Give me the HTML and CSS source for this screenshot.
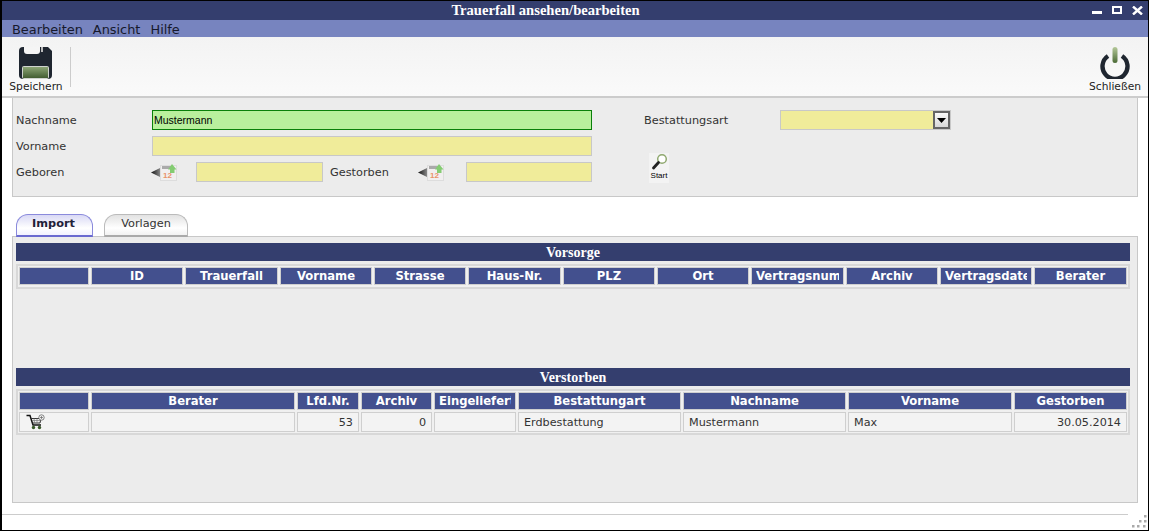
FILE: index.html
```html
<!DOCTYPE html>
<html lang="de">
<head>
<meta charset="utf-8">
<title>Trauerfall ansehen/bearbeiten</title>
<link rel="stylesheet" href="styles.css">
</head>
<body>
<div class="window">
  <header class="titlebar">
    <span class="title">Trauerfall ansehen/bearbeiten</span>
    <div class="winbtns">
      <svg class="winbtn" width="11" height="9" viewBox="0 0 11 9"><rect x="0" y="5" width="10" height="3" fill="#fff"/></svg>
      <svg class="winbtn" width="11" height="9" viewBox="0 0 11 9"><rect x="1" y="1" width="8" height="6" fill="none" stroke="#fff" stroke-width="2"/></svg>
      <svg class="winbtn" width="11" height="9" viewBox="0 0 11 9"><path d="M1 0.500 L10 8.500 M10 0.500 L1 8.500" stroke="#fff" stroke-width="2.400" fill="none"/></svg>
    </div>
  </header>
  <nav class="menubar"><span>Bearbeiten</span><span>Ansicht</span><span>Hilfe</span></nav>
  <div class="toolbar">
    <div class="tool tool-save">
      <svg width="34" height="32" viewBox="0 0 34 32">
        <defs><linearGradient id="g1" x1="0" y1="0" x2="0" y2="1"><stop offset="0" stop-color="#8fa878"/><stop offset="1" stop-color="#3f5a2e"/></linearGradient></defs>
        <path d="M4 0 H29 L33 4 V28 Q33 32 29 32 H4 Q0 32 0 28 V4 Q0 0 4 0Z" fill="#1f2630"/>
        <path d="M5 0 H21 V4 Q21 7 18 7 H8 Q5 7 5 4Z" fill="#f5f5f5"/>
        <rect x="22" y="0" width="2" height="5" fill="#bbb"/>
        <rect x="3.500" y="19.500" width="26" height="12" rx="1" fill="url(#g1)" stroke="#cfd3cf"/>
      </svg>
      <span>Speichern</span>
    </div>
    <div class="tool-sep"></div>
    <div class="tool tool-close">
      <svg width="30" height="32" viewBox="0 0 30 32">
        <defs><linearGradient id="g2" x1="0" y1="0" x2="0" y2="1"><stop offset="0" stop-color="#b5c99a"/><stop offset="1" stop-color="#4a6a35"/></linearGradient></defs>
        <path d="M8 9 A12.500 12.500 0 1 0 22 9" fill="none" stroke="#1f2630" stroke-width="4.400"/>
        <rect x="12.500" y="0" width="5" height="16" rx="2.500" fill="url(#g2)"/>
      </svg>
      <span>Schließen</span>
    </div>
  </div>
  <section class="form">
    <div class="form-left">
      <div class="row"><label class="lbl">Nachname</label><input class="inp inp-ok wide" value="Mustermann"></div>
      <div class="row"><label class="lbl">Vorname</label><input class="inp wide"></div>
      <div class="row">
        <label class="lbl">Geboren</label>
        <span class="cal">
          <svg width="27" height="17" viewBox="0 0 27 17"><defs><linearGradient id="g3" x1="0" y1="0" x2="1" y2="0"><stop offset="0" stop-color="#111"/><stop offset="1" stop-color="#888"/></linearGradient></defs><path d="M0 8.500 L9 4 V13Z" fill="url(#g3)"/><rect x="9.500" y="1.500" width="16" height="15" fill="#f1efef" stroke="#ddd"/><rect x="11" y="2" width="10" height="3" fill="#aaa"/><text x="12" y="14" class="cal-num">12</text><path d="M17 5.500 L21 0 L25.500 5.500 H23.500 V9 H19 V5.500Z" fill="#84cc72"/></svg>
        </span>
        <input class="inp date">
        <label class="lbl2">Gestorben</label>
        <span class="cal">
          <svg width="27" height="17" viewBox="0 0 27 17"><path d="M0 8.500 L9 4 V13Z" fill="url(#g3)"/><rect x="9.500" y="1.500" width="16" height="15" fill="#f1efef" stroke="#ddd"/><rect x="11" y="2" width="10" height="3" fill="#aaa"/><text x="12" y="14" class="cal-num">12</text><path d="M17 5.500 L21 0 L25.500 5.500 H23.500 V9 H19 V5.500Z" fill="#84cc72"/></svg>
        </span>
        <input class="inp date date-end">
      </div>
    </div>
    <div class="form-right">
      <div class="row"><label class="lbl">Bestattungsart</label>
        <div class="select"><span class="select-btn"><svg width="9" height="5" viewBox="0 0 9 5"><path d="M0 0 H9 L4.500 5Z" fill="#000"/></svg></span></div>
      </div>
      <div class="start">
        <svg width="17" height="19" viewBox="0 0 17 19"><circle cx="11" cy="6" r="4.300" fill="#fff" stroke="#8fa86f" stroke-width="1.500"/><path d="M7.500 9.500 L2.500 15" stroke="#222" stroke-width="2.800" stroke-linecap="round"/></svg>
        <span>Start</span>
      </div>
    </div>
  </section>
  <div class="tabs">
    <div class="tab tab-active">Import</div>
    <div class="tab">Vorlagen</div>
  </div>
  <section class="panel">
    <div class="group group-top">
      <h2 class="bar">Vorsorge</h2>
      <div class="grid grid-a">
        <div class="th"></div><div class="th"><span>ID</span></div><div class="th"><span>Trauerfall</span></div><div class="th"><span>Vorname</span></div><div class="th"><span>Strasse</span></div><div class="th"><span>Haus-Nr.</span></div><div class="th"><span>PLZ</span></div><div class="th"><span>Ort</span></div><div class="th"><span>Vertragsnummer</span></div><div class="th"><span>Archiv</span></div><div class="th"><span>Vertragsdatei</span></div><div class="th"><span>Berater</span></div>
      </div>
    </div>
    <div class="group">
      <h2 class="bar">Verstorben</h2>
      <div class="grid grid-b">
        <div class="th"></div><div class="th"><span>Berater</span></div><div class="th"><span>Lfd.Nr.</span></div><div class="th"><span>Archiv</span></div><div class="th"><span>Eingeliefert</span></div><div class="th"><span>Bestattungart</span></div><div class="th"><span>Nachname</span></div><div class="th"><span>Vorname</span></div><div class="th"><span>Gestorben</span></div>
        <div class="td td-icon">
          <svg width="19" height="16" viewBox="0 0 19 16"><path d="M0.500 1.500 H4 L7 11 H15" fill="none" stroke="#111" stroke-width="1.500"/><path d="M5 4.500 H15 L14 9 H6.500" fill="none" stroke="#333"/><path d="M6 6.500 H14.500 M8 4.500 L8.500 9 M11 4.500 L11 9" stroke="#777" stroke-width=".7"/><circle cx="7.500" cy="13.500" r="1.700" fill="#3a5a2a"/><circle cx="13.500" cy="13.500" r="1.700" fill="#3a5a2a"/><circle cx="15.500" cy="3.500" r="2.700" fill="#f4f4f4" stroke="#666" stroke-width=".8"/><path d="M14 3.500 H17 M15.500 2 V5" stroke="#666" stroke-width=".7"/></svg>
        </div>
        <div class="td"></div><div class="td num">53</div><div class="td num">0</div><div class="td"></div><div class="td">Erdbestattung</div><div class="td">Mustermann</div><div class="td">Max</div><div class="td num">30.05.2014</div>
      </div>
    </div>
  </section>
  <footer class="status">
    <svg class="grip" width="16" height="15" viewBox="0 0 16 15"><g fill="#aaa"><rect x="13" y="1" width="2.500" height="2.500"/><rect x="8" y="6" width="2.500" height="2.500"/><rect x="13" y="6" width="2.500" height="2.500"/><rect x="1" y="11" width="2.500" height="2.500"/><rect x="6" y="11" width="2.500" height="2.500"/><rect x="12" y="11" width="2.500" height="2.500"/></g></svg>
  </footer>
</div>
</body>
</html>
```
FILE: styles.css
```css
* { box-sizing: border-box; }
html, body { margin: 0; padding: 0; height: 100%; }
body { font-family: "DejaVu Sans", Verdana, sans-serif; font-size: 11px; color: #333; background: #fff; overflow: hidden; }
.window { width: 1149px; height: 531px; border: 1px solid #000; border-left-width: 2px; display: flex; flex-direction: column; background: #fff; }
.titlebar { height: 19px; flex: none; background: #343e6e; position: relative; display: flex; align-items: center; justify-content: center; }
.title { font-family: "Liberation Serif", "Times New Roman", serif; font-weight: bold; font-size: 14.600px; color: #fff; margin-left: -59px; }
.winbtns { position: absolute; right: 5px; top: 5px; display: flex; gap: 9px; }
.winbtn { display: block; }
.menubar { height: 17px; flex: none; background: #7784bf; display: flex; align-items: center; gap: 10px; padding: 1px 0 0 10px; font-size: 12.900px; color: #16192c; }
.toolbar { height: 61px; flex: none; background: linear-gradient(#f3f3f3, #fafafa); border-bottom: 2px solid #ccc; display: flex; align-items: flex-start; padding-top: 10px; }
.tool { display: flex; flex-direction: column; align-items: center; gap: 1px; font-size: 10.700px; color: #222; }
.tool span { line-height: 13px; }
.tool-save { width: 68px; }
.tool-sep { width: 1px; height: 40px; background: #ccc; }
.tool-close { margin-left: auto; width: 58px; margin-right: 4px; }
.form { height: 99px; flex: none; margin: 0 10px; background: #ececec; border: 1px solid #c8c8c8; border-top: 0; display: flex; padding: 12px 0 0 3px; font-size: 11.300px; }
.form-left { width: 628px; display: flex; flex-direction: column; gap: 6px; }
.row { display: flex; align-items: center; height: 20px; }
.lbl { width: 136px; flex: none; color: #333; }
.lbl2 { width: 89px; flex: none; margin-left: 7px; color: #333; }
.inp { height: 20px; background: #f0ec9a; border: 1px solid #c8c8c8; padding: 0 0 0 1px; font-family: "Liberation Sans", Arial, sans-serif; font-size: 10.500px; color: #000; outline: none; border-radius: 0; }
.wide { width: 440px; }
.inp-ok { background: #b9f09d; border-color: #0a800a; }
.date { width: 127px; }
.date-end { margin-left: 3px; width: 126px; }
.cal { width: 44px; flex: none; height: 20px; display: flex; align-items: center; }
.cal svg { display: block; margin-left: -1px; }
.cal-num { font-family: "Liberation Sans", sans-serif; font-size: 8px; font-weight: bold; fill: #e9926a; }
.form-right { display: flex; flex-direction: column; width: 320px; }
.form-right .lbl { width: 136px; }
.select { width: 171px; height: 20px; background: #f0ec9a; border: 1px solid #c8c8c8; display: flex; justify-content: flex-end; }
.select-btn { width: 17px; height: 18px; background: linear-gradient(#fafafa, #d8d8d8); border: 2px solid #666; display: flex; align-items: center; justify-content: center; }
.start { width: 20px; height: 30px; margin-top: 23px; margin-left: 5px; background: #f3f3f3; display: flex; flex-direction: column; align-items: center; font-family: "Liberation Sans", sans-serif; font-size: 8px; color: #000; line-height: 10px; }
.start svg { display: block; margin-bottom: -1px; }
.tabs { height: 39px; flex: none; display: flex; align-items: flex-end; gap: 11px; padding-left: 14px; font-size: 11.300px; }
.tab { width: 84px; height: 23px; margin-bottom: -1px; position: relative; z-index: 1; border: 1px solid #bbb; border-bottom: 2px solid #aaa; border-radius: 12px 12px 0 0; background: linear-gradient(#e2e2e2 0%, #fff 65%, #f2f2f2 100%); text-align: center; line-height: 18px; color: #333; }
.tab-active { width: 77px; border-color: #8a8adc; border-bottom-color: #6a6ad0; background: linear-gradient(#d9d9f5 0%, #fff 65%, #f2f2ff 100%); font-weight: bold; color: #1f2238; padding-right: 2px; }
.panel { width: 1126px; height: 267px; flex: none; margin-left: 10px; background: #ececec; border: 1px solid #c8c8c8; padding: 6px 7px 0 3px; display: flex; flex-direction: column; }
.group-top { height: 125px; flex: none; }
.bar { margin: 0 0 3px; height: 18px; background: #343e6e; color: #fff; font-family: "Liberation Serif", "Times New Roman", serif; font-weight: bold; font-size: 14px; line-height: 20px; text-align: center; }
.grid { display: grid; gap: 2px; width: 1114px; border: 2px solid #d8d8d8; background: #f0f0f0; padding: 1px; }
.grid-a { grid-template-columns: 70px 92px 93px 92px 92px 93px 92px 92px 93px 92px 92px 93px; padding-bottom: 2px; }
.grid-b { grid-template-columns: 70px 204px 62px 71px 82px 163px 163px 164px 113px; }
.th { height: 18px; background: #43508e; border: 1px solid #cfcfcf; color: #fff; font-weight: bold; font-size: 11.600px; line-height: 16px; text-align: center; padding: 0 4px; }
.th span { display: block; overflow: hidden; white-space: nowrap; }
.td { height: 20px; background: #f3f3f3; border: 1px solid #cfcfcf; font-size: 11.200px; line-height: 18px; padding: 1px 5px 0; color: #333; white-space: nowrap; overflow: hidden; }
.num { text-align: right; }
.td-icon { padding: 0 0 0 6px; }
.td-icon svg { display: block; margin-top: 1px; }
.status { height: 26px; flex: none; position: relative; }
.status::before { content: ""; display: block; margin-top: 11px; height: 1px; background: #ccc; width: 1126px; }
.grip { position: absolute; right: 1px; bottom: 0; }
```
